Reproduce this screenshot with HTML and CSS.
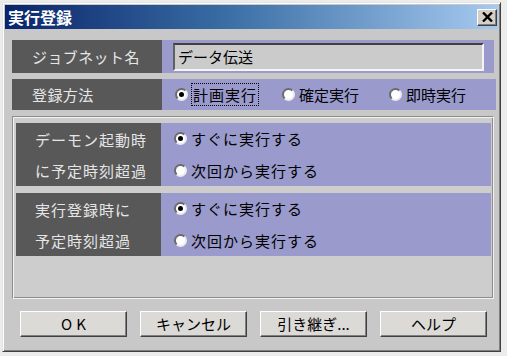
FILE: index.html
```html
<!DOCTYPE html>
<html lang="ja">
<head>
	<meta charset="utf-8">
	<title>実行登録</title>
	<link rel="stylesheet" href="styles.css">
</head>
<body>
	<div class="window">
		<div class="titlebar">
			<span class="title">実行登録</span>
			<span class="close">
				<svg width="11" height="10" viewBox="0 0 11 10">
					<path d="M1 0.5 L10 9.5 M10 0.5 L1 9.5" stroke="#000" stroke-width="2.4"/>
				</svg>
			</span>
		</div>

		<div class="content">
			<div class="row row-name">
				<div class="label">ジョブネット名</div>
				<div class="field">
					<div class="textbox">データ伝送</div>
				</div>
			</div>

			<div class="row row-method">
				<div class="label">登録方法</div>
				<div class="field radios">
					<span class="option"><span class="radio checked"></span><span class="focus">計画実行</span></span>
					<span class="option"><span class="radio"></span>確定実行</span>
					<span class="option"><span class="radio"></span>即時実行</span>
				</div>
			</div>

			<div class="group">
				<div class="row row-over">
					<div class="label label-two">デーモン起動時<br>に予定時刻超過</div>
					<div class="field stack">
						<span class="option"><span class="radio checked"></span>すぐに実行する</span>
						<span class="option"><span class="radio"></span>次回から実行する</span>
					</div>
				</div>
				<div class="row row-over">
					<div class="label label-two">実行登録時に<br>予定時刻超過</div>
					<div class="field stack">
						<span class="option"><span class="radio checked"></span>すぐに実行する</span>
						<span class="option"><span class="radio"></span>次回から実行する</span>
					</div>
				</div>
			</div>

			<div class="buttons">
				<button class="btn btn-ok">OK</button>
				<button class="btn">キャンセル</button>
				<button class="btn">引き継ぎ...</button>
				<button class="btn">ヘルプ</button>
			</div>
		</div>
	</div>
</body>
</html>
```

FILE: styles.css
```css
html {
	height: 100%;
}

body {
	margin: 0;
	padding: 2px;
	background: #ececec;
	font-family: "Noto Sans CJK JP", "Liberation Sans", sans-serif;
	font-size: 15px;
	color: #000;
}

.window {
	width: 493px;
	height: 344px;
	background: #c8c8c8;
	border: 1px solid;
	border-color: #e4e4e4 #404040 #404040 #e4e4e4;
	box-shadow: inset 1px 1px 0 #ffffff, inset -1px -1px 0 #808080;
	padding: 2px;
	display: flex;
	flex-direction: column;
}

.titlebar {
	height: 24px;
	background: linear-gradient(to right, #0a246a 0%, #3a6ea5 45%, #a6caf0 100%);
	display: flex;
	align-items: center;
	justify-content: space-between;
	padding: 0 1px 0 3px;
}

.title {
	color: #fff;
	font-weight: bold;
	font-size: 16px;
	line-height: 1;
}

.close {
	width: 18px;
	height: 15px;
	background: #d4d0c8;
	border: 1px solid;
	border-color: #fff #404040 #404040 #fff;
	box-shadow: inset -1px -1px 0 #808080;
	display: flex;
	align-items: center;
	justify-content: center;
}

.content {
	padding: 11px 4px 0 7px;
	display: flex;
	flex-direction: column;
}

.row {
	display: grid;
	grid-template-columns: 150px 1fr;
}

.row-name {
	height: 33px;
}

.row-method {
	height: 31px;
	margin-top: 6px;
}

.label {
	background: #585858;
	color: #e6e6e6;
	display: flex;
	align-items: center;
	padding-left: 20px;
	letter-spacing: 0.4px;
}

.field {
	background: #9a9acc;
	display: flex;
	align-items: center;
}

.textbox {
	flex: 1;
	height: 24px;
	margin: 1px 10px 0 11px;
	background: #cbcbcb;
	border: 2px solid;
	border-color: #404040 #f4f4f4 #f4f4f4 #606060;
	padding-left: 3px;
	line-height: 24px;
}

.radios {
	padding-left: 13px;
}

.option {
	display: flex;
	align-items: center;
	white-space: nowrap;
}

.radios .option {
	width: 107px;
}

.radio {
	width: 9px;
	height: 9px;
	border: 2px solid;
	border-color: #6a6a6a #ececec #ececec #6a6a6a;
	border-radius: 50%;
	background: #fff;
	margin-right: 4px;
	position: relative;
	flex: none;
}

.radio.checked::after {
	content: "";
	position: absolute;
	left: 2px;
	top: 2px;
	width: 5px;
	height: 5px;
	border-radius: 50%;
	background: #000;
}

.focus {
	outline: 1px dotted #000;
	outline-offset: 0;
	padding: 0 1px;
	letter-spacing: 1px;
}

.group {
	margin-top: 6px;
	height: 175px;
	border: 1px solid;
	border-color: #8c8c8c #f2f2f2 #f2f2f2 #8c8c8c;
	box-shadow: inset 1px 1px 0 #f2f2f2, inset -1px -1px 0 #8c8c8c;
	background: #cdcdcd;
	padding: 6px 2px 0 3px;
	display: flex;
	flex-direction: column;
	gap: 7px;
}

.row-over {
	height: 63px;
	grid-template-columns: 145px 1fr;
}

.label-two {
	padding-left: 19px;
	line-height: 31px;
	letter-spacing: 1px;
}

.stack {
	flex-direction: column;
	align-items: flex-start;
	justify-content: center;
	padding-left: 13px;
	gap: 11px;
	letter-spacing: 1px;
}

.buttons {
	display: flex;
	gap: 13px;
	padding-left: 8px;
	margin-top: 12px;
}

.btn {
	width: 107px;
	height: 26px;
	background: #dcdad6;
	border: 1px solid;
	border-color: #fff #404040 #404040 #fff;
	box-shadow: inset -1px -1px 0 #808080;
	font-family: "Noto Sans CJK JP", "Liberation Sans", sans-serif;
	font-size: 15px;
	color: #000;
	padding: 0;
	line-height: 22px;
}

.btn-ok {
	letter-spacing: 4px;
	text-indent: 4px;
}
```
